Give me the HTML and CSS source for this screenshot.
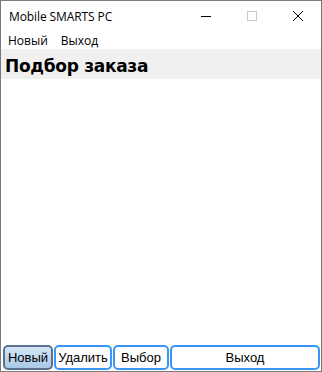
FILE: index.html
```html
<!DOCTYPE html>
<html lang="ru">
    <head>
        <title>Mobile SMARTS PC</title>
        <meta charset="utf-8">
        <link rel="stylesheet" href="styles.css">
    </head>
    <body>
        <div class="window">
            <div class="titlebar">
                <span class="title">Mobile SMARTS PC</span>
                <div class="controls">
                    <span class="ctl">
                        <svg width="10" height="10" viewBox="0 0 10 10"><path d="M0 5.5 H10" stroke="#000" stroke-width="1"/></svg>
                    </span>
                    <span class="ctl">
                        <svg width="10" height="10" viewBox="0 0 10 10"><rect x="0.5" y="0.5" width="9" height="9" fill="none" stroke="#c8c8c8" stroke-width="1"/></svg>
                    </span>
                    <span class="ctl">
                        <svg width="10" height="10" viewBox="0 0 10 10"><path d="M0 0 L10 10 M10 0 L0 10" stroke="#000" stroke-width="1"/></svg>
                    </span>
                </div>
            </div>
            <div class="menubar">
                <span class="menu-item">Новый</span>
                <span class="menu-item">Выход</span>
            </div>
            <div class="header">Подбор заказа</div>
            <div class="content"></div>
            <div class="buttons">
                <button class="btn btn-active">Новый</button>
                <button class="btn btn-del">Удалить</button>
                <button class="btn btn-pick">Выбор</button>
                <button class="btn btn-exit">Выход</button>
            </div>
        </div>
    </body>
</html>
```

FILE: styles.css
```css
html, body {
  margin: 0;
  padding: 0;
  width: 100%;
  height: 100%;
}

body {
  background: #fff;
  font-family: "Open Sans", "Noto Sans", Arial, sans-serif;
  color: #000;
}

.window {
  box-sizing: border-box;
  width: 322px;
  height: 372px;
  border: 1px solid #7a7a7a;
  display: flex;
  flex-direction: column;
  background: #fff;
}

.titlebar {
  height: 30px;
  display: flex;
  align-items: center;
  justify-content: space-between;
  flex-shrink: 0;
}

.title {
  padding-left: 8px;
  font-size: 12px;
  padding-top: 1px;
  letter-spacing: -0.1px;
}

.controls {
  display: flex;
  height: 100%;
}

.ctl {
  width: 46px;
  display: flex;
  align-items: center;
  justify-content: center;
}

.ctl svg {
  display: block;
}

.menubar {
  height: 18px;
  display: flex;
  align-items: center;
  padding-left: 1px;
  font-size: 12px;
  flex-shrink: 0;
}

.menu-item {
  padding: 0 6px 0 6px;
  margin-right: 1px;
}

.header {
  height: 30px;
  background: #f0f0f0;
  font-family: "DejaVu Sans", Verdana, sans-serif;
  font-weight: bold;
  font-size: 17px;
  line-height: 34px;
  padding-left: 4px;
  flex-shrink: 0;
  letter-spacing: -0.3px;
}

.content {
  flex: 1;
}

.buttons {
  display: flex;
  gap: 1px;
  padding: 0 1px 1px 2px;
  height: 25px;
  flex-shrink: 0;
}

.btn {
  box-sizing: border-box;
  height: 25px;
  margin: 0;
  padding: 0;
  font-family: "Liberation Sans", Arial, sans-serif;
  font-size: 13px;
  color: #000;
  background: #fff;
  border: 2px solid #3a96f6;
  border-radius: 5px;
}

.btn-active {
  width: 50px;
  border: 2px solid #5b7390;
  background: linear-gradient(#d4e6f6, #a9c9e6);
}

.btn-del {
  width: 58px;
}

.btn-pick {
  width: 56px;
}

.btn-exit {
  flex: 1;
}
```
